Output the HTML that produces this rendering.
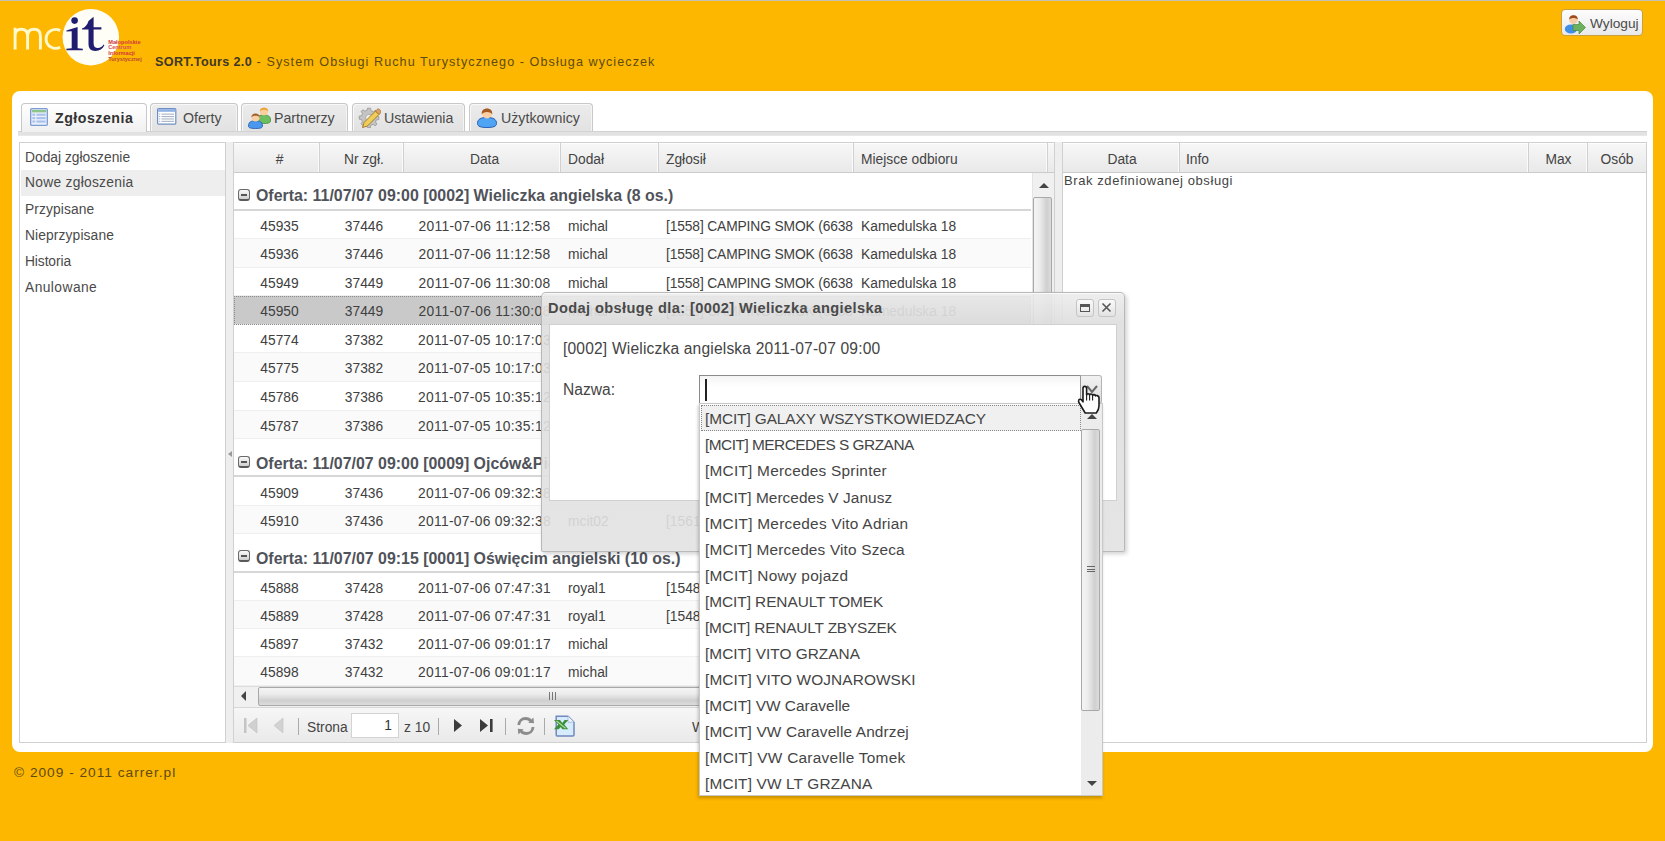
<!DOCTYPE html>
<html><head><meta charset="utf-8">
<style>
*{box-sizing:border-box;margin:0;padding:0}
html,body{width:1665px;height:841px;overflow:hidden}
body{background:#FDB700;font-family:"Liberation Sans",sans-serif;position:relative;color:#333}
.a{position:absolute}
.nw{white-space:nowrap}
#topline{left:0;top:0;width:1665px;height:1px;background:#c4c0b4}
#title{left:155px;top:55px;font-size:12.6px;letter-spacing:1.06px;color:#5e4a12;white-space:nowrap}
#title b{color:#3e3828;letter-spacing:0.35px}
#logout{left:1561px;top:9px;width:82px;height:27px;border:1px solid #c8a040;border-radius:4px;background:linear-gradient(#fdfdfd,#e9e9e9)}
#logout span{position:absolute;left:28px;top:6px;font-size:13.7px;color:#4a4a4a}
#panel{left:12px;top:91px;width:1641px;height:661px;background:#fff;border-radius:8px}
#foot{left:14px;top:765px;font-size:13.7px;letter-spacing:1.0px;color:#5e4a12;white-space:nowrap}
/* tabs */
.tab{position:absolute;top:103px;height:28px;border:1px solid #c8c8c8;border-bottom:none;border-radius:4px 4px 0 0;background:linear-gradient(#ececec,#e2e2e2);box-shadow:inset 1px 1px 0 #f8f8f8,inset -1px 0 0 #f4f4f4;font-size:14.2px;color:#4a4a4a;white-space:nowrap}
.tab.act{background:linear-gradient(#ffffff,#f0f0f0);box-shadow:none;height:29px;color:#333;font-weight:bold}
.tab span{position:absolute;top:6px}
.tab.act span{letter-spacing:0.5px}
#strip{left:18px;top:131px;width:1629px;height:5px;background:#e2e2e2;border-top:1px solid #d2d2d2;border-bottom:1px solid #e8e8e8}
/* left nav */
#nav{left:19px;top:142px;width:207px;height:601px;border:1px solid #d0d0d0;background:#fff}
.ni{position:absolute;left:1px;width:204px;height:26px;font-size:13.8px;color:#4a4a4a;padding-left:4px;line-height:26px}
.ni.sel{background:#eeeeee}
#split1{left:226px;top:142px;width:7px;height:601px;background:#eeeeee}
#split2{left:1055px;top:142px;width:7px;height:601px;background:#eeeeee}
/* grid */
#grid{left:233px;top:142px;width:822px;height:601px;border:1px solid #d0d0d0;background:#fff;overflow:hidden}
.hd{position:absolute;top:0;height:30px;background:linear-gradient(#f7f7f7,#e9e9e9);box-shadow:inset 0 1px 0 #fdfdfd;border-bottom:1px solid #cbcbcb;font-size:13.8px;color:#444;line-height:30px;white-space:nowrap}
.hs{position:absolute;top:0;width:1px;height:29px;background:#d0d0d0;box-shadow:-1px 0 0 #fbfbfb}
.row{position:absolute;left:0;width:797px;height:28.65px;border-bottom:1px solid #efefef;font-size:13.8px;color:#404040;white-space:nowrap}
.row.alt{background:#fafafa}
.row.sel{background:#c9c9c9}
.row.sel:before{content:"";position:absolute;left:0;top:0;right:0;bottom:-1px;border:1px dotted #8c8c8c}
.row span{position:absolute;top:8px}
.row .dc{padding-left:6px;letter-spacing:0.3px}
.grp{position:absolute;left:0;width:797px;height:37px;border-bottom:2px solid #d6d6d6;font-size:15.9px;font-weight:bold;color:#50535a;letter-spacing:0.01px;white-space:nowrap}
.grp span{position:absolute;left:22px;top:13px}
.grp i{position:absolute;left:4px;top:16px;width:12px;height:12px;border:1px solid #6a6a6a;border-bottom:2px solid #5a5a5a;border-radius:3px;background:linear-gradient(#fafafa,#d0d0d0)}
.grp i:after{content:"";position:absolute;left:2px;top:4px;width:6px;height:2px;background:#555}
.hd span{position:absolute;top:2px}
.c{text-align:center;padding-left:6px}
#vscroll{position:absolute;left:798px;top:30px;width:22px;height:513px;background:#f0f0f0;border-left:1px solid #e4e4e4}
#hscroll{position:absolute;left:0;top:543px;width:820px;height:21px;background:#f0f0f0;border-top:1px solid #dcdcdc}
#tbar{position:absolute;left:0;top:564px;width:820px;height:35px;background:linear-gradient(#f6f6f6,#eaeaea);border-top:1px solid #d8d8d8}

.uarr{position:absolute;width:0;height:0;border-left:5px solid transparent;border-right:5px solid transparent;border-bottom:5px solid #444}
.darr{position:absolute;width:0;height:0;border-left:5px solid transparent;border-right:5px solid transparent;border-top:5px solid #444}
.larr{position:absolute;width:0;height:0;border-top:5px solid transparent;border-bottom:5px solid transparent;border-right:5px solid #444}
.vthumb{position:absolute;border:1px solid #a8a8a8;border-radius:2px;background:linear-gradient(90deg,#f4f4f4 0%,#ececec 35%,#cfcfcf 75%,#dcdcdc 100%)}
.hthumb{position:absolute;border:1px solid #a8a8a8;border-radius:2px;background:linear-gradient(#f4f4f4 0%,#ececec 35%,#cfcfcf 75%,#dcdcdc 100%)}
.grip{position:absolute;left:290px;top:4px;width:9px;height:8px;background:repeating-linear-gradient(90deg,#777 0,#777 1px,transparent 1px,transparent 3px)}
.tsep{position:absolute;top:10px;width:1px;height:17px;background:#aaa}
.ttxt{position:absolute;top:12px;font-size:13.8px;color:#444;white-space:nowrap}
.tin{position:absolute;top:5px;width:48px;height:25px;border:1px solid #d4d4d4;background:#fff}
.tin span{position:absolute;right:6px;top:4px;font-size:13.8px;color:#333}

#dlg{left:541px;top:292px;width:584px;height:260px;background:linear-gradient(rgba(236,236,236,0.9),rgba(222,222,222,0.9) 30px,rgba(226,226,226,0.9));box-shadow:inset 0 1px 0 rgba(255,255,255,0.7),2px 2px 4px rgba(0,0,0,0.18);border:1px solid rgba(180,180,180,0.9);border-radius:5px 5px 2px 2px}
#dtitle{position:absolute;left:6px;top:7px;font-size:14.6px;font-weight:bold;letter-spacing:0.39px;color:#4a4a4a;white-space:nowrap}
.dbtn{position:absolute;top:6px;width:18px;height:18px;border:1px solid #c4c4c4;border-radius:3px;background:linear-gradient(#fafafa,#e2e2e2)}
.maxi{position:absolute;left:3px;top:4px;width:10px;height:8px;border:1.5px solid #555;border-top-width:3px}
#dbody{position:absolute;left:7px;top:31px;width:568px;height:177px;background:#fff;border:1px solid #d0d0d0}
.dtxt{position:absolute;font-size:15.6px;color:#444;white-space:nowrap}
#combo{left:699px;top:375px;width:382px;height:29px;border:1px solid #8a8a8a;border-right:none;background:linear-gradient(#f4f4f4,#ffffff 40%);}
#caret{position:absolute;left:5px;top:3px;width:1.5px;height:22px;background:#222}
#trig{left:1080px;top:375px;width:22px;height:29px;border:1px solid #b4b4b4;border-left:1px solid #999;border-radius:0 3px 3px 0;background:linear-gradient(#f2f2f2,#dcdcdc)}
#dd{left:699px;top:403px;width:404px;height:393px;background:#fff;border:1px solid #c8c8c8;box-shadow:-1px 2px 3px rgba(0,0,0,0.22)}
.dit{position:absolute;left:5px;height:26px;line-height:26px;font-size:15.4px;letter-spacing:0.2px;color:#454545;white-space:nowrap}
#ddsel{position:absolute;left:1px;top:1px;width:380px;height:26px;background:#f0f0f0;border:1px dotted #888}
#ddscroll{position:absolute;left:381px;top:0;width:21px;height:391px;background:#ececec}
.grip2{position:absolute;left:5px;top:136px;width:8px;height:8px;background:repeating-linear-gradient(#666 0,#666 1px,transparent 1px,transparent 2.5px)}
/* right grid */
#brak{position:absolute;left:1px;top:30px;font-size:13px;letter-spacing:0.58px;color:#444;white-space:nowrap}
#rgrid{left:1062px;top:142px;width:585px;height:601px;border:1px solid #d0d0d0;background:#fff}
</style></head><body>
<div class="a" id="topline"></div>

<!-- logo -->
<svg class="a" style="left:0;top:0" width="150" height="72" viewBox="0 0 150 72">
  <circle cx="90.8" cy="37.2" r="28.2" fill="#fffef6"/>
  <g fill="none" stroke="#fff9cc" stroke-width="2.9">
    <path d="M15.1 49.6 V27.8 M15.1 36 C15.1 31.2 17.8 29.3 21.3 29.3 C25 29.3 27.6 31.5 27.6 36 V49.6 M27.6 36 C27.6 31.2 30.4 29.3 34 29.3 C37.7 29.3 40.4 31.5 40.4 36 V49.6"/>
    <path d="M60.2 30.6 A9.6 9.4 0 1 0 60.2 47.2"/>
  </g>
  <g fill="#201c70">
    <circle cx="74.6" cy="20.6" r="3.3"/>
    <path d="M66.4 30.4 L77.6 27 L77.6 48.3 L82.8 48.7 L82.8 50.3 L66.4 50.3 L66.4 48.7 L71.7 48.3 L71.7 31.3 L66.4 31.6 Z"/>
    <path d="M88.5 21 L93.6 16.8 L93.6 27.2 L101.4 27.2 L101.4 29.4 L93.6 29.4 L93.6 43.2 C93.6 46.6 95.3 48.1 97.8 48.1 C100.3 48.1 102.3 46.8 103.6 44.6 L104.4 45.3 C102.6 49 99.6 51 95.4 51 C90.9 51 88.5 48.6 88.5 43.8 L88.5 29.4 L82 29.4 L82 28.4 C85.2 27.5 87.3 25 88.5 21 Z"/>
  </g>
  <g font-family="Liberation Sans" font-size="5.6" font-weight="bold" fill="#d2383c">
    <text x="108.2" y="43.6" textLength="32.4" lengthAdjust="spacingAndGlyphs">Małopolskie</text>
    <text x="108.2" y="49.2" textLength="23" lengthAdjust="spacingAndGlyphs" fill="#d8505a">Centrum</text>
    <text x="108.2" y="55.1" textLength="26.7" lengthAdjust="spacingAndGlyphs">Informacji</text>
    <text x="108.2" y="60.6" textLength="33.5" lengthAdjust="spacingAndGlyphs" fill="#c04a30">Turystycznej</text>
  </g>
</svg>

<div class="a" id="title"><b>SORT.Tours 2.0</b> - System Obsługi Ruchu Turystycznego - Obsługa wycieczek</div>

<div class="a" id="logout"><span>Wyloguj</span></div>

<div class="a" id="panel"></div>
<div class="a" id="foot">© 2009 - 2011 carrer.pl</div>

<!-- tabs -->
<div class="a" id="strip"></div>
<div class="tab act" style="left:21px;width:126px"><span style="left:33px">Zgłoszenia</span></div>
<div class="tab" style="left:150px;width:88px"><span style="left:32px">Oferty</span></div>
<div class="tab" style="left:241px;width:107px"><span style="left:32px">Partnerzy</span></div>
<div class="tab" style="left:352px;width:113px"><span style="left:31px">Ustawienia</span></div>
<div class="tab" style="left:469px;width:124px"><span style="left:31px">Użytkownicy</span></div>


<!-- tab icons -->
<svg class="a" style="left:30px;top:108px" width="18" height="18" viewBox="0 0 19 19">
  <rect x="0.7" y="0.7" width="17.6" height="17.6" rx="1.2" fill="#e9f0fb" stroke="#7e9cd4" stroke-width="1.4"/>
  <rect x="2" y="2" width="15" height="2.6" fill="#8dc48a"/>
  <g fill="#a9c1ea"><rect x="2.5" y="6" width="3" height="2.2"/><rect x="6.8" y="6" width="9.7" height="2.2"/><rect x="2.5" y="9.6" width="3" height="2.2"/><rect x="6.8" y="9.6" width="9.7" height="2.2"/><rect x="2.5" y="13.2" width="3" height="2.2"/><rect x="6.8" y="13.2" width="9.7" height="2.2"/></g>
</svg>
<svg class="a" style="left:157px;top:108px" width="20" height="17" viewBox="0 0 20 17">
  <rect x="0.6" y="0.6" width="18.2" height="15.6" rx="1" fill="#ffffff" stroke="#6f8fc4" stroke-width="1.2"/>
  <rect x="1.2" y="1.2" width="17" height="2.6" fill="#8eb0e4"/>
  <g fill="#8aa4cc"><rect x="2.2" y="5.6" width="1" height="1"/><rect x="2.2" y="8" width="1" height="1"/><rect x="2.2" y="10.4" width="1" height="1"/><rect x="2.2" y="12.8" width="1" height="1"/></g>
  <g fill="#a8b4c4"><rect x="4.5" y="5.6" width="12.5" height="1.1"/><rect x="4.5" y="8" width="12.5" height="1.1"/><rect x="4.5" y="10.4" width="12.5" height="1.1"/><rect x="4.5" y="12.8" width="12.5" height="1.1"/></g>
</svg>
<svg class="a" style="left:247px;top:105px" width="24" height="24" viewBox="0 0 24 24">
  <path d="M8.5 16.5 C8.5 11.5 11.5 10 17 10 C22.5 10 24 12.5 23.5 16.5 C23 18 21 18.5 17 18.5 C12 18.5 8.5 18 8.5 16.5Z" fill="#6cbf5e" stroke="#4a8a3e" stroke-width="0.8"/>
  <circle cx="17" cy="6.5" r="4" fill="#f7cf98"/>
  <path d="M12.8 6.5 C12.5 1.5 21.5 1.5 21.2 6.5 C20 4.2 14 4.2 12.8 6.5Z" fill="#e8a030"/>
  <path d="M1.5 21 C1.5 16.5 4.5 15.8 8.5 15.8 C12.5 15.8 15.5 16.5 15.5 21 C15.5 23 13 23.5 8.5 23.5 C4 23.5 1.5 23 1.5 21Z" fill="#4a98ee" stroke="#2a62b0" stroke-width="0.9"/>
  <circle cx="8.5" cy="12.5" r="4" fill="#fbcfa6"/>
  <path d="M4.3 12.5 C4 7 13 7 12.7 12.5 C11.5 10 5.5 10 4.3 12.5Z" fill="#a0622c"/>
</svg>
<svg class="a" style="left:358px;top:107px" width="23" height="22" viewBox="0 0 23 22">
  <g transform="translate(11 10.7)"><g fill="#c4c4c4" stroke="#8e8e8e" stroke-width="0.7"><path d="M-1.6 -9.5 H1.6 L2 -7 L4.5 -6 L6.4 -7.6 L8.2 -5.8 L6.6 -3.8 L7.5 -1.5 L9.8 -1.2 V1.8 L7.4 2.2 L6.5 4.4 L8 6.4 L6 8.2 L4.1 6.6 L1.8 7.5 L1.5 9.8 H-1.6 L-2 7.4 L-4.3 6.5 L-6.2 8 L-8 6 L-6.6 4.1 L-7.5 1.8 L-9.8 1.5 V-1.6 L-7.4 -2 L-6.5 -4.3 L-8 -6.2 L-6 -8 L-4.1 -6.6 L-1.9 -7.5 Z"/></g><circle r="3.4" fill="#efefef" stroke="#9a9a9a" stroke-width="0.7"/></g>
  <path d="M4.5 20.5 L6 15.5 L17.5 4 L21 7.5 L9.5 19 Z" fill="#f0cc58" stroke="#9c7420" stroke-width="0.9"/>
  <path d="M17.5 4 L19 2.5 C19.8 1.8 20.8 1.8 21.5 2.5 L22.5 3.5 C23.2 4.2 23 5.2 22.5 6 L21 7.5 Z" fill="#e0a070" stroke="#9c7420" stroke-width="0.8"/>
</svg>
<svg class="a" style="left:476px;top:106px" width="22" height="23" viewBox="0 0 22 23">
  <path d="M1.5 17.5 C1.5 13 5 11.5 11 11.5 C17 11.5 20.5 13 20.5 17.5 C20.5 20.5 17 21.5 11 21.5 C5 21.5 1.5 20.5 1.5 17.5Z" fill="#4fa4f4" stroke="#2860b4" stroke-width="1"/>
  <circle cx="11" cy="7.5" r="5" fill="#fbcfa4"/>
  <path d="M5.8 8.5 C4.5 0.5 17.5 0.5 16.2 8.5 C15.5 5 6.5 5 5.8 8.5Z" fill="#a45a22"/>
</svg>
<!-- logout icon -->
<svg class="a" style="left:1564px;top:13px" width="23" height="21" viewBox="0 0 23 21">
  <ellipse cx="7" cy="16" rx="6.2" ry="4.5" fill="#3f8ee8"/>
  <circle cx="9.5" cy="6.8" r="4.3" fill="#f5cca5"/>
  <path d="M5.2 6.5 C4.8 0.8 14.2 0.8 13.8 6.5 C12 4.5 7 4.5 5.2 6.5Z" fill="#a04a1a"/>
  <path d="M9 11.5 H15 V8 L21.5 14.5 L15 21 V17.5 H9 Z" fill="#6cb060" stroke="#4a8a40" stroke-width="0.7"/>
</svg>
<!-- nav -->
<div class="a" id="nav">
  <div class="ni" style="top:2px">Dodaj zgłoszenie</div>
  <div class="ni sel" style="top:27px;letter-spacing:0.28px">Nowe zgłoszenia</div>
  <div class="ni" style="top:54px;letter-spacing:0.11px">Przypisane</div>
  <div class="ni" style="top:80px;letter-spacing:0.12px">Nieprzypisane</div>
  <div class="ni" style="top:106px;letter-spacing:-0.1px">Historia</div>
  <div class="ni" style="top:132px;letter-spacing:0.44px">Anulowane</div>
</div>
<div class="a" id="split1"></div>
<div class="a" id="split2"></div>
<div class="a" style="left:228px;top:451px;width:0;height:0;border-top:3px solid transparent;border-bottom:3px solid transparent;border-right:4px solid #999"></div>

<div class="a" id="grid">
<div class="hd" style="left:0;width:820px">
  <span class="c" style="left:0;width:85px">#</span>
  <span class="c" style="left:85px;width:84px">Nr zgł.</span>
  <span class="c" style="left:169px;width:157px">Data</span>
  <span style="left:334px">Dodał</span>
  <span style="left:432px">Zgłosił</span>
  <span style="left:627px">Miejsce odbioru</span>
</div>
<div class="hs" style="left:85px"></div><div class="hs" style="left:169px"></div><div class="hs" style="left:326px"></div><div class="hs" style="left:424px"></div><div class="hs" style="left:619px"></div><div class="hs" style="left:813px"></div>
<div id="rows">
<div class="grp" style="top:30.00px;height:37.50px"><i style="top:16.3px"></i><span style="top:14.0px">Oferta: 11/07/07 09:00 [0002] Wieliczka angielska (8 os.)</span></div>
<div class="row" style="top:67.50px;height:28.575px"><span class="c" style="left:0;width:85px">45935</span><span class="c" style="left:85px;width:84px">37446</span><span class="c dc" style="left:169px;width:157px">2011-07-06 11:12:58</span><span style="left:334px">michal</span><span style="left:432px;letter-spacing:-0.13px">[1558] CAMPING SMOK (6638</span><span style="left:627px">Kamedulska 18</span></div>
<div class="row alt" style="top:96.08px;height:28.575px"><span class="c" style="left:0;width:85px">45936</span><span class="c" style="left:85px;width:84px">37446</span><span class="c dc" style="left:169px;width:157px">2011-07-06 11:12:58</span><span style="left:334px">michal</span><span style="left:432px;letter-spacing:-0.13px">[1558] CAMPING SMOK (6638</span><span style="left:627px">Kamedulska 18</span></div>
<div class="row" style="top:124.65px;height:28.575px"><span class="c" style="left:0;width:85px">45949</span><span class="c" style="left:85px;width:84px">37449</span><span class="c dc" style="left:169px;width:157px">2011-07-06 11:30:08</span><span style="left:334px">michal</span><span style="left:432px;letter-spacing:-0.13px">[1558] CAMPING SMOK (6638</span><span style="left:627px">Kamedulska 18</span></div>
<div class="row alt sel" style="top:153.23px;height:28.575px"><span class="c" style="left:0;width:85px">45950</span><span class="c" style="left:85px;width:84px">37449</span><span class="c dc" style="left:169px;width:157px">2011-07-06 11:30:08</span><span style="left:334px">michal</span><span style="left:432px;letter-spacing:-0.13px">[1558] CAMPING SMOK (6638</span><span style="left:627px">Kamedulska 18</span></div>
<div class="row" style="top:181.80px;height:28.575px"><span class="c" style="left:0;width:85px">45774</span><span class="c" style="left:85px;width:84px">37382</span><span class="c dc" style="left:169px;width:157px">2011-07-05 10:17:03</span><span style="left:334px">michal</span><span style="left:432px;letter-spacing:-0.13px">[1558] CAMPING SMOK (6638</span><span style="left:627px">Kamedulska 18</span></div>
<div class="row alt" style="top:210.38px;height:28.575px"><span class="c" style="left:0;width:85px">45775</span><span class="c" style="left:85px;width:84px">37382</span><span class="c dc" style="left:169px;width:157px">2011-07-05 10:17:03</span><span style="left:334px">michal</span><span style="left:432px;letter-spacing:-0.13px">[1558] CAMPING SMOK (6638</span><span style="left:627px">Kamedulska 18</span></div>
<div class="row" style="top:238.95px;height:28.575px"><span class="c" style="left:0;width:85px">45786</span><span class="c" style="left:85px;width:84px">37386</span><span class="c dc" style="left:169px;width:157px">2011-07-05 10:35:12</span><span style="left:334px">michal</span><span style="left:432px;letter-spacing:-0.13px">[1558] CAMPING SMOK (6638</span><span style="left:627px">Kamedulska 18</span></div>
<div class="row alt" style="top:267.53px;height:28.575px"><span class="c" style="left:0;width:85px">45787</span><span class="c" style="left:85px;width:84px">37386</span><span class="c dc" style="left:169px;width:157px">2011-07-05 10:35:12</span><span style="left:334px">michal</span><span style="left:432px;letter-spacing:-0.13px">[1558] CAMPING SMOK (6638</span><span style="left:627px">Kamedulska 18</span></div>
<div class="grp" style="top:296.10px;height:38.40px"><i style="top:17.2px"></i><span style="top:15.6px">Oferta: 11/07/07 09:00 [0009] Ojców&amp;Pieskowa Skała (6 os.)</span></div>
<div class="row" style="top:334.50px;height:28.250px"><span class="c" style="left:0;width:85px">45909</span><span class="c" style="left:85px;width:84px">37436</span><span class="c dc" style="left:169px;width:157px">2011-07-06 09:32:38</span><span style="left:334px">mcit02</span><span style="left:432px">[1561] HOTEL</span><span style="left:627px">Kamedulska 18</span></div>
<div class="row alt" style="top:362.75px;height:28.250px"><span class="c" style="left:0;width:85px">45910</span><span class="c" style="left:85px;width:84px">37436</span><span class="c dc" style="left:169px;width:157px">2011-07-06 09:32:38</span><span style="left:334px">mcit02</span><span style="left:432px">[1561] HOTEL</span><span style="left:627px">Kamedulska 18</span></div>
<div class="grp" style="top:391.00px;height:38.80px"><i style="top:16.2px"></i><span style="top:15.5px">Oferta: 11/07/07 09:15 [0001] Oświęcim angielski (10 os.)</span></div>
<div class="row" style="top:429.80px;height:28.225px"><span class="c" style="left:0;width:85px">45888</span><span class="c" style="left:85px;width:84px">37428</span><span class="c dc" style="left:169px;width:157px">2011-07-06 07:47:31</span><span style="left:334px">royal1</span><span style="left:432px">[1548] HOTEL ROYAL</span><span style="left:627px">Św. Gertrudy 26</span></div>
<div class="row alt" style="top:458.02px;height:28.225px"><span class="c" style="left:0;width:85px">45889</span><span class="c" style="left:85px;width:84px">37428</span><span class="c dc" style="left:169px;width:157px">2011-07-06 07:47:31</span><span style="left:334px">royal1</span><span style="left:432px">[1548] HOTEL ROYAL</span><span style="left:627px">Św. Gertrudy 26</span></div>
<div class="row" style="top:486.25px;height:28.225px"><span class="c" style="left:0;width:85px">45897</span><span class="c" style="left:85px;width:84px">37432</span><span class="c dc" style="left:169px;width:157px">2011-07-06 09:01:17</span><span style="left:334px">michal</span><span style="left:432px"></span><span style="left:627px"></span></div>
<div class="row alt" style="top:514.48px;height:28.225px"><span class="c" style="left:0;width:85px">45898</span><span class="c" style="left:85px;width:84px">37432</span><span class="c dc" style="left:169px;width:157px">2011-07-06 09:01:17</span><span style="left:334px">michal</span><span style="left:432px"></span><span style="left:627px"></span></div>
</div>
<div id="vscroll"><i class="uarr" style="left:6px;top:10px"></i><div class="vthumb" style="left:0px;top:24px;width:19px;height:488px"></div></div>
<div id="hscroll"><i class="larr" style="left:7px;top:4px"></i><div class="hthumb" style="left:24px;top:0px;width:592px;height:19px"><span class="grip"></span></div></div>
<div id="tbar">
  <svg style="position:absolute;left:9px;top:9px" width="16" height="17" viewBox="0 0 16 17"><rect x="1" y="1" width="2.5" height="15" fill="#c4c4c4"/><path d="M14 1 L5 8.5 L14 16 Z" fill="#d0d0d0" stroke="#c0c0c0" stroke-width="0.6"/></svg>
  <svg style="position:absolute;left:39px;top:9px" width="11" height="17" viewBox="0 0 11 17"><path d="M10 1 L1 8.5 L10 16 Z" fill="#d2d2d2" stroke="#c4c4c4" stroke-width="0.6"/></svg>
  <span class="tsep" style="left:64px"></span>
  <span class="ttxt" style="left:73px">Strona</span>
  <div class="tin" style="left:117px"><span>1</span></div>
  <span class="ttxt" style="left:170px">z 10</span>
  <span class="tsep" style="left:204px"></span>
  <svg style="position:absolute;left:219px;top:9px" width="10" height="17" viewBox="0 0 10 17"><path d="M1 2 L9 8.5 L1 15 Z" fill="#3c3c3c"/></svg>
  <svg style="position:absolute;left:245px;top:9px" width="15" height="17" viewBox="0 0 15 17"><path d="M1 2 L9 8.5 L1 15 Z" fill="#3c3c3c"/><rect x="11" y="2" width="2.6" height="13" fill="#3c3c3c"/></svg>
  <span class="tsep" style="left:271px"></span>
  <svg style="position:absolute;left:282px;top:8px" width="20" height="20" viewBox="0 0 20 20">
  <path d="M2.8 9 C3 5 6 2.5 9.5 2.5 C12 2.5 13.8 3.6 15 5.2" fill="none" stroke="#8c8c8c" stroke-width="2.8"/>
  <path d="M12.2 6.8 L18 7.2 L17.4 1.6 Z" fill="#8c8c8c"/>
  <path d="M17 11 C16.8 15 13.8 17.5 10.3 17.5 C7.8 17.5 6 16.4 4.8 14.8" fill="none" stroke="#8c8c8c" stroke-width="2.8"/>
  <path d="M7.6 13.2 L1.8 12.8 L2.4 18.4 Z" fill="#8c8c8c"/>
</svg>
  <span class="tsep" style="left:310px"></span>
  <svg style="position:absolute;left:320px;top:7px" width="22" height="23" viewBox="0 0 22 23">
  <path d="M2.2 1.2 H14 L20 7.2 V19.8 C20 20.6 19.5 21 18.8 21 H3.2 C2.5 21 2.2 20.6 2.2 19.8 Z" fill="#d6ebfb" stroke="#7088c0" stroke-width="1.5"/>
  <path d="M14 1.2 V7.2 H20" fill="#eef6fd" stroke="#9fb0d6" stroke-width="0.8"/>
  <path d="M0 5 H6 L8.3 8 L10.6 5 H14.2 L10.3 9.6 L14.2 14.2 H8.3 L6.8 12 L4.6 14.2 H0 L4.3 9.6 Z" fill="#3d8f3a"/>
  <path d="M2.5 6 L11.5 13.2" stroke="#a8dc98" stroke-width="1.2"/>
</svg>
  <span class="ttxt" style="left:458px">Wyświetlono</span>
</div>
</div>
<div class="a" id="rgrid">
<div class="hd" style="left:0;width:583px">
  <span class="c" style="left:0;width:116px;padding-left:2px">Data</span>
  <span style="left:123px">Info</span>
  <span class="c" style="left:466px;width:59px;padding-left:0">Max</span>
  <span class="c" style="left:525px;width:58px;padding-left:0">Osób</span>
</div>
<div class="hs" style="left:116px"></div><div class="hs" style="left:465px"></div><div class="hs" style="left:524px"></div>
<div id="brak">Brak zdefiniowanej obsługi</div>
</div>


<!-- dialog -->
<div class="a" id="dlg">
  <div id="dtitle">Dodaj obsługę dla: [0002] Wieliczka angielska</div>
  <div class="dbtn" style="left:534px"><i class="maxi"></i></div>
  <div class="dbtn" style="left:556px"><svg width="15" height="15" viewBox="0 0 15 15" style="position:absolute;left:0;top:0"><path d="M3.5 3.5 L11.5 11.5 M11.5 3.5 L3.5 11.5" stroke="#555" stroke-width="1.6"/></svg></div>
  <div id="dbody">
    <div class="dtxt" style="left:13px;top:15px;letter-spacing:0.17px">[0002] Wieliczka angielska 2011-07-07 09:00</div>
    <div class="dtxt" style="left:13px;top:56px">Nazwa:</div>
  </div>
</div>
<div class="a" id="combo"><i id="caret"></i></div>
<div class="a" id="trig"></div>
<!-- dropdown -->
<div class="a" id="dd">
<div id="ddsel"></div>
<div class="dit" style="top:2.30px;letter-spacing:-0.091px">[MCIT] GALAXY WSZYSTKOWIEDZACY</div>
<div class="dit" style="top:28.37px;letter-spacing:-0.493px">[MCIT] MERCEDES S GRZANA</div>
<div class="dit" style="top:54.44px;letter-spacing:0.234px">[MCIT] Mercedes Sprinter</div>
<div class="dit" style="top:80.51px;letter-spacing:0.066px">[MCIT] Mercedes V Janusz</div>
<div class="dit" style="top:106.58px;letter-spacing:0.257px">[MCIT] Mercedes Vito Adrian</div>
<div class="dit" style="top:132.65px;letter-spacing:0.162px">[MCIT] Mercedes Vito Szeca</div>
<div class="dit" style="top:158.72px;letter-spacing:0.263px">[MCIT] Nowy pojazd</div>
<div class="dit" style="top:184.79px;letter-spacing:-0.051px">[MCIT] RENAULT TOMEK</div>
<div class="dit" style="top:210.86px;letter-spacing:-0.167px">[MCIT] RENAULT ZBYSZEK</div>
<div class="dit" style="top:236.93px;letter-spacing:0.028px">[MCIT] VITO GRZANA</div>
<div class="dit" style="top:263.00px;letter-spacing:0.102px">[MCIT] VITO WOJNAROWSKI</div>
<div class="dit" style="top:289.07px;letter-spacing:0.035px">[MCIT] VW Caravelle</div>
<div class="dit" style="top:315.14px;letter-spacing:0.139px">[MCIT] VW Caravelle Andrzej</div>
<div class="dit" style="top:341.21px;letter-spacing:0.266px">[MCIT] VW Caravelle Tomek</div>
<div class="dit" style="top:367.28px;letter-spacing:0.154px">[MCIT] VW LT GRZANA</div>
<div id="ddscroll"><i class="uarr" style="left:6px;top:10px"></i><div class="vthumb" style="left:0px;top:25px;width:19px;height:282px"><span class="grip2"></span></div><i class="darr" style="left:6px;top:377px"></i></div>
</div>

<!-- trigger arrow + hand cursor -->
<svg class="a" style="left:1082px;top:382px" width="20" height="16" viewBox="0 0 20 16"><path d="M5 4 L10 10 L15 4" fill="none" stroke="#666" stroke-width="2"/></svg>
<svg class="a" style="left:1077px;top:382px" width="26" height="34" viewBox="0 0 26 34">
  <path d="M6 6.5 C6 3.6 9.6 3.6 9.6 6.5 V13 C9.6 11.4 12.6 11.4 12.6 13 C12.6 11.6 15.6 11.6 15.6 13.4 C15.6 12.3 18.6 12.3 18.6 14 C18.6 13.2 22 13.2 22 15.5 V24 C22 27 20.8 29 19.3 31 H8.2 L2.2 21 C0.6 18.6 2.2 16.2 4.2 17.6 L6 19.8 Z" fill="#fff" stroke="#1c1c1c" stroke-width="1.6" stroke-linejoin="round"/>
  <path d="M9.6 13 V18.5 M12.6 13 V18.5 M15.6 13.4 V18.5" stroke="#1c1c1c" stroke-width="1.1"/>
</svg>
</body></html>
